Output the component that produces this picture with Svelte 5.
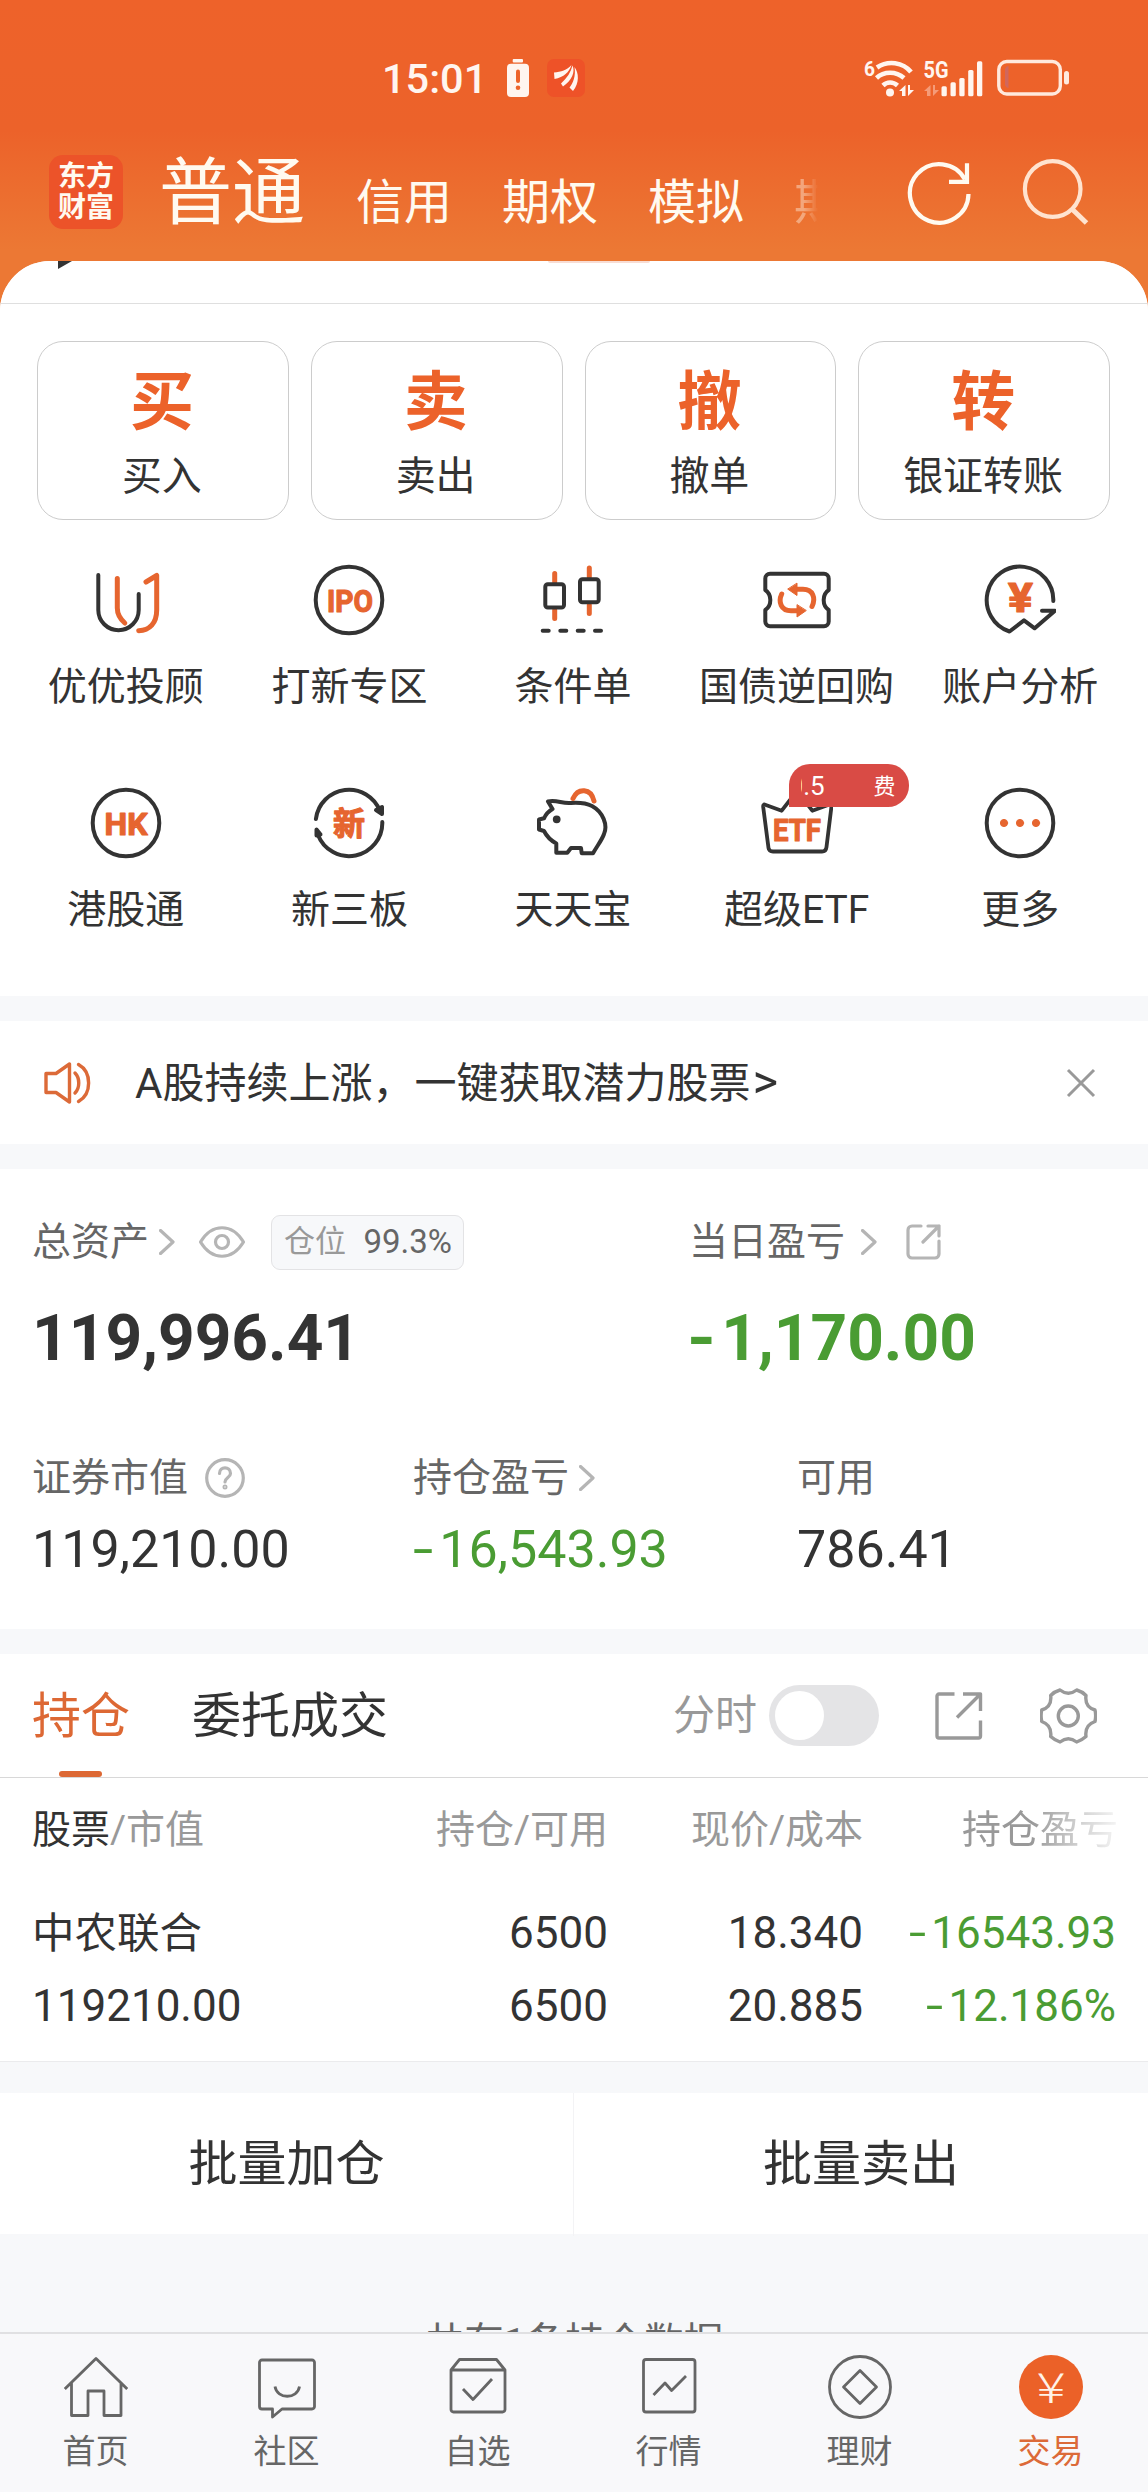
<script>
    const accounts = ['信用', '期权', '模拟']

    const trades = [
        { mark: '买', label: '买入' },
        { mark: '卖', label: '卖出' },
        { mark: '撤', label: '撤单' },
        { mark: '转', label: '银证转账' },
    ]

    const services = [
        { icon: 'uu', label: '优优投顾' },
        { icon: 'ipo', label: '打新专区' },
        { icon: 'candle', label: '条件单' },
        { icon: 'ticket', label: '国债逆回购' },
        { icon: 'account', label: '账户分析' },
        { icon: 'hk', label: '港股通' },
        { icon: 'xin', label: '新三板' },
        { icon: 'pig', label: '天天宝' },
        { icon: 'etf', label: '超级ETF', badge: true },
        { icon: 'more', label: '更多' },
    ]

    const tabs = [
        { icon: 'home', label: '首页' },
        { icon: 'chat', label: '社区' },
        { icon: 'pick', label: '自选' },
        { icon: 'market', label: '行情' },
        { icon: 'money', label: '理财' },
        { icon: 'trade', label: '交易' },
    ]

    let active = 'trade'
    let showTime = false
    let showNotice = true
</script>

<div class="page">
    <header>
        <div class="status">
            <div class="status-left">
                <span class="time">15:01</span>
                <svg class="bat-alert" width="22" height="38" viewBox="0 0 22 38">
                    <rect x="5.700" y="0" width="10.300" height="3.400" rx="1" fill="#fff5ef" />
                    <rect x="0" y="4.700" width="22" height="33.300" rx="4" fill="#fff5ef" />
                    <path d="M11 12.500v9.500" stroke="#ed632a" stroke-width="4" stroke-linecap="round" />
                    <circle cx="11" cy="28.800" r="2.300" fill="#ed632a" />
                </svg>
                <svg width="38" height="38" viewBox="0 0 38 38">
                    <rect width="38" height="38" rx="7" fill="#ee5228" />
                    <path d="M7 13.500C14 13 20 11 24.500 6C22 13.500 17 18 7.500 20Z" fill="#fff5ef" />
                    <path d="M14 24.500C20 19 24 13 25.500 6.500C28.500 13 25 21 16 27.500Z" fill="#fff5ef" />
                    <path d="M27.500 8C32 14 32.500 24 26 32L22.500 28.500C26 24 29 17 27.500 8Z" fill="#fff5ef" />
                </svg>
            </div>
            <div class="status-right">
                <svg class="wifi" width="56" height="42" viewBox="0 0 56 42">
                    <text x="4" y="18.500" font-size="21" font-weight="700" fill="#fff5ef" textLength="11" lengthAdjust="spacingAndGlyphs">6</text>
                    <g fill="none" stroke="#fff5ef" stroke-width="4.600">
                        <path d="M17 10.500C28 3 43 5 51 15" />
                        <path d="M16.500 21C24 14 36 14 44 21" />
                        <path d="M23 28.500C27 24.500 33 24.500 37.500 28.500" />
                    </g>
                    <circle cx="30" cy="35.500" r="4" fill="#fff5ef" />
                    <path d="M45.500 28v11h-3.500v-5h-3zM48 39V28h2v5h4z" fill="#fff5ef" />
                </svg>
                <svg width="64" height="42" viewBox="0 0 64 42">
                    <text x="3.500" y="21" font-size="23" font-weight="700" fill="#fff5ef" textLength="25" lengthAdjust="spacingAndGlyphs">5G</text>
                    <path d="M10.500 28v11h-3.500v-5h-3zM13 39V28h2v5h4z" fill="#f59b78" />
                    <g fill="#fff5ef">
                        <rect x="21.500" y="29.300" width="5.300" height="10" rx="1.500" />
                        <rect x="30.500" y="25.300" width="5.300" height="14" rx="1.500" />
                        <rect x="39.300" y="21" width="5.300" height="18.300" rx="1.500" />
                        <rect x="48.200" y="13" width="5.300" height="26.300" rx="1.500" />
                        <rect x="57" y="4.300" width="5.300" height="35" rx="1.500" />
                    </g>
                </svg>
                <svg class="battery" width="74" height="38" viewBox="0 0 74 38">
                    <rect x="1.800" y="2.500" width="61.500" height="32.500" rx="8" fill="none" stroke="#ffe9dd" stroke-width="3.400" />
                    <path d="M8 10c1-2 2-3 3.500-3v22c-1.500 0-2.500-1-3.500-3z" fill="#d0675d" />
                    <rect x="67" y="12" width="5" height="13.500" rx="2.500" fill="#ffe9dd" />
                </svg>
            </div>
        </div>
        <div class="nav">
            <div class="logo"><span>东方</span><span>财富</span></div>
            <div class="current">普通</div>
            {#each accounts as name}
                <div class="acct">{name}</div>
            {/each}
            <div class="acct faded">期</div>
            <div class="tools">
                <svg width="64" height="64" viewBox="0 0 64 64" fill="none" stroke="#fffaf0" stroke-width="4.200">
                    <path d="M61.500 33A29.300 29.300 0 1 1 58 18.500" />
                    <path d="M60 2.300V20.800H42" />
                </svg>
                <svg width="70" height="70" viewBox="0 0 70 70" fill="none" stroke="#ffe3cf" stroke-width="4.200">
                    <circle cx="32.700" cy="31" r="27.800" />
                    <path d="M52 51L66.500 65" stroke-width="5" />
                </svg>
            </div>
        </div>
    </header>

    <main>
        <div class="peek">
            <span class="corner"></span>
            <span class="blush"></span>
        </div>

        <section class="entry">
            <div class="trades">
                {#each trades as t}
                    <div class="trade">
                        <b>{t.mark}</b>
                        <span>{t.label}</span>
                    </div>
                {/each}
            </div>
            <div class="services">
                {#each services as s}
                    <div class="service">
                        <div class="service-icon">
                            <svg width="72" height="72" viewBox="0 0 72 72" fill="none" stroke="#333" stroke-width="4" stroke-linecap="round" stroke-linejoin="round">
                                {#if s.icon === 'uu'}
                                    <path d="M8.300 11V46a20.200 20.200 0 0 0 40.400 0V30" />
                                    <path class="o" d="M27.300 14.500V44c0 6 3 11 7.500 15M56 18L66.700 11.500V46c0 13-7 20.500-18 20.700" />
                                {:else if s.icon === 'ipo'}
                                    <circle cx="36" cy="36" r="33.300" />
                                    <text x="14" y="47.500" font-size="32" textLength="46" lengthAdjust="spacingAndGlyphs">IPO</text>
                                {:else if s.icon === 'candle'}
                                    <path class="o" d="M17.700 9.500V18M17.700 46v8.500M52.300 4v9M52.300 41v8.500" />
                                    <rect x="8.300" y="20.300" width="18.700" height="23.300" rx="2.500" />
                                    <rect x="43" y="15.300" width="18.700" height="23" rx="2.500" />
                                    <path d="M5.700 66.700h6M23.300 66.700h6M40.700 66.700h6M58 66.700h6" />
                                {:else if s.icon === 'ticket'}
                                    <path d="M9 9.700H63a4.700 4.700 0 0 1 4.700 4.700V26C61 30.500 61 41.500 67.700 46V57.600A4.700 4.700 0 0 1 63 62.300H9A4.700 4.700 0 0 1 4.300 57.600V46C11 41.500 11 30.500 4.300 26V14.400A4.700 4.700 0 0 1 9 9.700Z" />
                                    <path class="o" d="M20.700 30C17 38 20 46.700 30 46.700H37M51 42.500C55 34 52 25.300 42 25.300H35" />
                                    <path class="head" d="M36 41v12l9-6.300zM36 19.500v12l-9-6.200z" />
                                {:else if s.icon === 'account'}
                                    <path d="M69.300 37A33.300 33.300 0 1 0 25.500 67.500L40 56.300L50.700 64.300L71 46.700H58" />
                                    <text x="24" y="48" font-size="41" textLength="25" lengthAdjust="spacingAndGlyphs">¥</text>
                                {:else if s.icon === 'hk'}
                                    <circle cx="36" cy="36" r="33.300" />
                                    <text x="14.500" y="47.500" font-size="32" textLength="43" lengthAdjust="spacingAndGlyphs">HK</text>
                                {:else if s.icon === 'xin'}
                                    <path d="M2.900 32A33.300 33.300 0 0 1 67 24M69.300 35A33.300 33.300 0 0 1 5 48" />
                                    <path d="M69 20v7l-6-4zM3.500 42.500v6l4-1z" />
                                    <text x="20" y="48" font-size="32">新</text>
                                {:else if s.icon === 'pig'}
                                    <path d="M11 14.500C20 12.500 25 17 34 16C42 15.500 48 15.500 55 19C66 25 71 38 67 47C65 53 60 59 56 66.300H44.700L44 61H34L30.300 65.700H19.300V56.500C13 53 9 48 7 44L2 42.500V32.500L7 31.300C8.500 28 12 24 15.500 22Z" />
                                    <circle cx="19.700" cy="32.300" r="2.400" fill="#333" stroke-width="3" />
                                    <path class="o" d="M36 11.500C41 .5 54 1 57 14" />
                                {:else if s.icon === 'etf'}
                                    <path d="M3.500 17.500L20.700 23.700L36 4L51.300 23.700L68.500 17.500Q70.800 17.500 70.400 20L65.500 60Q65 64.500 61 64.500H12Q8 64.500 7.500 61L2.200 20Q2 17.500 3.500 17.500Z" stroke-width="3.800" />
                                    <text x="12" y="54" font-size="32" textLength="48" lengthAdjust="spacingAndGlyphs">ETF</text>
                                {:else}
                                    <circle cx="36" cy="36" r="33.300" />
                                    <g class="dots"><circle cx="20" cy="36" r="3.600" /><circle cx="36" cy="36" r="3.600" /><circle cx="52" cy="36" r="3.600" /></g>
                                {/if}
                            </svg>
                            {#if s.badge}
                                <div class="badge">
                                    <div class="roll"><span class="rate">0.5</span><span>费</span></div>
                                </div>
                            {/if}
                        </div>
                        <span>{s.label}</span>
                    </div>
                {/each}
            </div>
        </section>

        {#if showNotice}
            <section class="notice">
                <svg width="48" height="42" viewBox="0 0 48 42" fill="none" stroke="#dc6a38" stroke-width="3.400" stroke-linejoin="round">
                    <path d="M2 11.500H12L25.500 2V40L12 30.500H2Z" />
                    <path d="M31 11C36 16 36 26 31 31M34.500 2.500C48 10 48 32 34.500 39.500" stroke-linecap="round" />
                </svg>
                <p>A股持续上涨，一键获取潜力股票<span>&gt;</span></p>
                <svg class="close" width="30" height="30" viewBox="0 0 30 30" on:click={() => (showNotice = false)}>
                    <path d="M2 2L28 28M28 2L2 28" stroke="#999" stroke-width="3" />
                </svg>
            </section>
        {/if}

        <section class="assets">
            <div class="row top">
                <div class="cell">
                    <div class="name">
                        总资产
                        <svg class="chev" width="16" height="26" viewBox="0 0 16 26"><path d="M1.500 1.500L14 13L1.500 24.500" /></svg>
                        <svg class="eye" width="46" height="32" viewBox="0 0 46 32">
                            <path d="M1.500 16C13-3 33-3 44.500 16C33 35 13 35 1.500 16Z" />
                            <circle cx="23" cy="16" r="6.500" />
                        </svg>
                        <div class="ratio"><span>仓位</span>99.3%</div>
                    </div>
                    <div class="big">119,996.41</div>
                </div>
                <div class="cell">
                    <div class="name">
                        当日盈亏
                        <svg class="chev day" width="16" height="26" viewBox="0 0 16 26"><path d="M1.500 1.500L14 13L1.500 24.500" /></svg>
                        <svg class="share" width="35" height="36" viewBox="0 0 35 36">
                            <path d="M15 2H6a4 4 0 0 0-4 4V30a4 4 0 0 0 4 4H29a4 4 0 0 0 4-4V17M22 2H33V12M33 2L17 18" />
                        </svg>
                    </div>
                    <div class="big down"><i>-</i>1,170.00</div>
                </div>
            </div>
            <div class="row sub">
                <div class="cell">
                    <div class="name">
                        证券市值
                        <svg class="help" width="40" height="40" viewBox="0 0 40 40">
                            <circle cx="20" cy="20" r="18.300" />
                            <path d="M14.500 15.500C14.500 8 25.500 8 25.500 15.500C25.500 19.500 20 19.500 20 24" />
                            <circle cx="20" cy="29" r=".9" />
                        </svg>
                    </div>
                    <div class="val">119,210.00</div>
                </div>
                <div class="cell">
                    <div class="name">
                        持仓盈亏
                        <svg class="chev" width="16" height="26" viewBox="0 0 16 26"><path d="M1.500 1.500L14 13L1.500 24.500" /></svg>
                    </div>
                    <div class="val down"><i>-</i>16,543.93</div>
                </div>
                <div class="cell">
                    <div class="name">可用</div>
                    <div class="val">786.41</div>
                </div>
            </div>
        </section>

        <section class="holding">
            <div class="bar">
                <div class="tab on">持仓</div>
                <div class="tab">委托成交</div>
                <div class="ops">
                    <span>分时</span>
                    <div class="switch" class:checked={showTime} on:click={() => (showTime = !showTime)}></div>
                    <svg class="out" width="48" height="48" viewBox="0 0 48 48">
                        <path d="M19.500 2H4a2 2 0 0 0-2 2V44a2 2 0 0 0 2 2H43.500a2 2 0 0 0 2-2V28.500M28 2H45.500V19M45 2.500L22 25.500" />
                    </svg>
                    <svg class="gear" width="57" height="56" viewBox="0 0 57 56">
                        <path d="M20 2Q28.300 8.500 36.700 2Q42 3.500 46 7.500Q44.500 19 55 22Q56.300 28 55 33.500Q44.500 37 46 48.500Q42 52 36.700 54Q28.300 47.500 20 54Q14.500 52 10.700 48.500Q12 37 1.700 33.500Q.5 28 1.700 22Q12 19 10.700 7.500Q14.500 3.500 20 2Z" />
                        <circle cx="28.300" cy="28" r="10" />
                    </svg>
                </div>
            </div>
            <div class="table head">
                <div><em>股票</em>/市值</div>
                <div>持仓/可用</div>
                <div>现价/成本</div>
                <div class="cut">持仓盈亏</div>
            </div>
            <div class="table body">
                <div class="stock">中农联合</div>
                <div>6500</div>
                <div>18.340</div>
                <div class="down"><i>-</i>16543.93</div>
                <div>119210.00</div>
                <div>6500</div>
                <div>20.885</div>
                <div class="down"><i>-</i>12.186%</div>
            </div>
        </section>

        <section class="batch">
            <div>批量加仓</div>
            <div>批量卖出</div>
        </section>

        <div class="total">共有1条持仓数据</div>
    </main>

    <footer>
        {#each tabs as tab}
            <div class="foot" class:active={active === tab.icon} on:click={() => (active = tab.icon)}>
                <svg width="64" height="64" viewBox="0 0 64 64" fill="none" stroke="#666" stroke-width="2.800" stroke-linejoin="round">
                    {#if tab.icon === 'home'}
                        <path d="M.8 34L32 3.500L63.200 34M7.500 28V60.500H24V36H40V60.500H57V28" />
                    {:else if tab.icon === 'chat'}
                        <path d="M7 5H57a2.500 2.500 0 0 1 2.500 2.500V51.500A2.500 2.500 0 0 1 57 54H27L17.500 62V54H7A2.500 2.500 0 0 1 4.500 51.500V7.500A2.500 2.500 0 0 1 7 5Z" />
                        <path d="M20 31.500C22 44.500 42.500 44.500 44.500 31.500" />
                    {:else if tab.icon === 'pick'}
                        <path d="M5 15L13.500 4.500H50.500L59 15V54.500a2.500 2.500 0 0 1-2.500 2.500H7.500A2.500 2.500 0 0 1 5 54.500ZM5 15H59M17 34L27 44.500L46 24" />
                    {:else if tab.icon === 'market'}
                        <rect x="6.500" y="4.500" width="51.500" height="52.500" rx="2.500" />
                        <path d="M16.500 40L28 28L34.600 35.500L49 21" />
                    {:else if tab.icon === 'money'}
                        <circle cx="32" cy="32" r="30.500" />
                        <path d="M32 15.500L48.500 32L32 48.500L15.500 32Z" />
                    {:else}
                        <circle cx="32" cy="32" r="32" fill="#eb6128" stroke="none" />
                        <text x="17.500" y="48" font-size="42" textLength="29" lengthAdjust="spacingAndGlyphs">¥</text>
                    {/if}
                </svg>
                <span>{tab.label}</span>
            </div>
        {/each}
    </footer>
</div>

<style>
    :global(body) {
        background: #f7f8fa;
    }
    .page {
        position: relative;
        display: flex;
        flex-direction: column;
        width: 1148px;
        height: 2492px;
        overflow: hidden;
        box-sizing: border-box;
        color: #333;
        font-family: Roboto, "Noto Sans CJK SC", sans-serif;
        background: linear-gradient(#ee622a 0, #ec622a 130px, #ec7834 250px, #ec7834 320px, #f7f8fa 320px);
    }
    svg {
        display: block;
        flex: none;
    }
    header {
        height: 261px;
        flex: none;
    }
    .status {
        display: flex;
        justify-content: space-between;
        align-items: center;
        height: 127px;
        padding: 29px 77px 0 382px;
        box-sizing: border-box;
    }
    .status-left, .status-right {
        display: flex;
        align-items: center;
    }
    .time {
        width: 125px;
        font-size: 41.5px;
        font-weight: 500;
        color: #fff5ef;
        white-space: nowrap;
    }
    .bat-alert {
        margin-right: 18px;
    }
    .status-right svg text {
        stroke: none;
    }
    .wifi {
        margin-right: 4px;
    }
    .battery {
        margin-left: 13px;
    }
    .nav {
        display: flex;
        align-items: flex-end;
        height: 102px;
        padding: 0 58px 0 49px;
        color: #fffaf0;
    }
    .logo {
        display: flex;
        flex-direction: column;
        justify-content: center;
        align-items: center;
        width: 74px;
        height: 74px;
        margin-right: 36px;
        border-radius: 14px;
        background: #ec5329;
        font-size: 28px;
        font-weight: 700;
        line-height: 31px;
    }
    .current {
        width: 197px;
        margin-bottom: -4px;
        font-size: 73px;
        line-height: 80px;
    }
    .acct {
        width: 146px;
        margin-bottom: -4px;
        font-size: 48px;
        line-height: 60px;
    }
    .faded {
        width: 48px;
        opacity: .4;
        -webkit-mask-image: linear-gradient(90deg, #000 20%, transparent 50%);
        mask-image: linear-gradient(90deg, #000 20%, transparent 50%);
    }
    .tools {
        display: flex;
        align-items: flex-start;
        gap: 49px;
        height: 71px;
        margin-left: auto;
    }
    .tools svg:first-child {
        margin-top: 3px;
    }
    main {
        flex: 1;
        min-height: 0;
        overflow: hidden;
        border-radius: 50px 50px 0 0;
        background: #f7f8fa;
    }
    section {
        background: #fff;
        margin-bottom: 25px;
    }
    .peek {
        position: relative;
        height: 43px;
        background: #fff;
        border-bottom: 1px solid #dfdfdf;
        box-sizing: border-box;
    }
    .corner {
        position: absolute;
        left: 58px;
        top: 0;
        border-top: 8px solid #333;
        border-right: 14px solid transparent;
    }
    .blush {
        position: absolute;
        left: 548px;
        top: 0;
        width: 102px;
        height: 2px;
        border-radius: 0 0 50px 50px;
        background: #f8ddd4;
    }
    .entry {
        height: 692px;
        padding-top: 37px;
        box-sizing: border-box;
    }
    .trades {
        display: grid;
        grid-template-columns: repeat(4, 1fr);
        gap: 22px;
        padding: 0 38px 0 37px;
    }
    .trade {
        display: flex;
        flex-direction: column;
        align-items: center;
        height: 179px;
        padding: 19px 2px 0 0;
        border: 1px solid #ccc;
        border-radius: 26px;
        box-sizing: border-box;
    }
    .trade b {
        font-size: 64px;
        line-height: 84px;
        color: #ec622a;
    }
    .trade span {
        font-size: 40px;
        line-height: 64px;
    }
    .services {
        display: grid;
        grid-template-columns: repeat(5, 1fr);
        padding: 44px 16px 0 14px;
    }
    .service {
        display: flex;
        flex-direction: column;
        align-items: center;
        height: 223px;
        font-size: 39px;
        white-space: nowrap;
    }
    .service > span {
        margin-top: 23px;
        line-height: 56px;
    }
    .service-icon {
        position: relative;
    }
    .service .o {
        stroke: #e6652f;
        stroke-width: 5;
    }
    .service text {
        fill: #e6652f;
        stroke: #e6652f;
        stroke-width: 1.2;
        font-weight: 700;
    }
    .service .head, .dots {
        fill: #e6652f;
        stroke: #e6652f;
        stroke-width: 1;
    }
    .badge {
        position: absolute;
        left: 28px;
        top: -23px;
        width: 120px;
        height: 43px;
        padding: 0 13px 0 12px;
        border-radius: 21px 21px 21px 0;
        box-sizing: border-box;
        background: #d94b45;
        color: #fff;
    }
    .roll {
        display: flex;
        justify-content: space-between;
        overflow: hidden;
        font-size: 22px;
        line-height: 45px;
    }
    .rate {
        margin-left: -12px;
        font-size: 26px;
    }
    .notice {
        display: flex;
        align-items: center;
        height: 123px;
        padding: 0 52px 0 44px;
    }
    .notice p {
        flex: 1;
        margin: 2px 0 0 43px;
        font-size: 42px;
        line-height: 60px;
    }
    .notice p span {
        margin-left: 2px;
        font-size: 49px;
        line-height: 1;
    }
    .assets {
        height: 460px;
        padding: 42px 32px 0;
        box-sizing: border-box;
    }
    .row {
        display: grid;
    }
    .top {
        grid-template-columns: 657px 1fr;
    }
    .sub {
        grid-template-columns: 381px 384px 1fr;
        margin-top: 68px;
    }
    .name {
        display: flex;
        align-items: center;
        height: 62px;
        font-size: 39px;
        line-height: 62px;
        color: #666;
    }
    .name svg {
        fill: none;
        stroke: #b5b5b5;
        stroke-width: 3.2;
        stroke-linecap: round;
        stroke-linejoin: round;
    }
    .chev {
        margin-left: 10px;
    }
    .day {
        margin-left: 16px;
    }
    .eye {
        margin-left: 24px;
    }
    .share {
        margin-left: 29px;
    }
    .help {
        margin-left: 17px;
    }
    .ratio {
        display: flex;
        align-items: center;
        justify-content: space-between;
        width: 193px;
        height: 55px;
        margin-left: 26px;
        padding: 0 11px 0 12px;
        border: 1px solid #e3e3e5;
        border-radius: 9px;
        box-sizing: border-box;
        background: #f7f8fa;
        font-size: 33px;
        line-height: 52px;
    }
    .ratio span {
        font-size: 31px;
        color: #999;
    }
    .big {
        margin-top: 26px;
        font-size: 64px;
        font-weight: 700;
        line-height: 80px;
    }
    .val {
        margin-top: 10px;
        font-size: 52px;
        line-height: 62px;
    }
    .down {
        color: #4a9c33;
    }
    .down i {
        display: inline-block;
        font-style: normal;
        transform: scaleX(1.4);
        transform-origin: 0 50%;
        margin-right: .23em;
    }
    .big i {
        margin-left: -2px;
        margin-right: 9px;
        transform: scaleX(1.15);
    }
    .bar {
        display: flex;
        align-items: center;
        height: 124px;
        padding: 0 51px 0 32px;
        border-bottom: 1px solid #d8d8d8;
        box-sizing: border-box;
    }
    .tab {
        position: relative;
        margin-right: 62px;
        padding-top: 2px;
        font-size: 49px;
        line-height: 121px;
    }
    .on {
        color: #dd6834;
    }
    .on::after {
        content: '';
        position: absolute;
        left: 27px;
        bottom: 0;
        width: 43px;
        height: 6px;
        border-radius: 3px;
        background: #dd6834;
    }
    .ops {
        display: flex;
        align-items: center;
        margin-left: auto;
        font-size: 42px;
        line-height: 60px;
        color: #999;
    }
    .ops svg {
        fill: none;
        stroke: #999;
        stroke-width: 3.4;
        stroke-linejoin: round;
    }
    .switch {
        width: 110px;
        height: 61px;
        margin-left: 12px;
        padding: 6px;
        border-radius: 31px;
        box-sizing: border-box;
        background: #e4e4e6;
    }
    .switch::after {
        content: '';
        display: block;
        width: 49px;
        height: 49px;
        border-radius: 50%;
        background: #fff;
    }
    .switch.checked {
        background: #eb6128;
    }
    .switch.checked::after {
        margin-left: auto;
    }
    .out {
        margin-left: 56px;
    }
    .gear {
        margin-left: 57px;
    }
    .holding {
        height: 407px;
        margin-bottom: 31px;
        border-bottom: 1px solid #ebebed;
    }
    .table {
        display: grid;
        grid-template-columns: 301px 275px 255px 1fr;
        padding: 0 32px;
        text-align: right;
        white-space: nowrap;
    }
    .table > div:nth-child(4n + 1) {
        text-align: left;
    }
    .head {
        font-size: 39px;
        line-height: 104px;
        color: #999;
    }
    .head em {
        font-style: normal;
        color: #333;
    }
    .head .cut {
        margin-right: -2px;
        -webkit-mask-image: linear-gradient(90deg, #000 66%, rgba(0, 0, 0, .5) 83%, rgba(0, 0, 0, .1) 100%);
        mask-image: linear-gradient(90deg, #000 66%, rgba(0, 0, 0, .5) 83%, rgba(0, 0, 0, .1) 100%);
    }
    .body {
        padding-top: 15px;
        font-size: 44px;
        line-height: 73px;
    }
    .body .stock {
        font-size: 42.5px;
    }
    .batch {
        display: grid;
        grid-template-columns: 573px 1fr;
        height: 141px;
        margin-bottom: 79px;
        font-size: 49px;
        line-height: 143px;
        text-align: center;
    }
    .batch div + div {
        border-left: 1px solid #f3f3f5;
    }
    .total {
        font-size: 39.5px;
        line-height: 60px;
        text-align: center;
        color: #666;
    }
    footer {
        display: grid;
        grid-template-columns: repeat(6, 1fr);
        height: 160px;
        flex: none;
        padding-right: 2px;
        border-top: 2px solid #e0e0e2;
        box-sizing: border-box;
        background: #f8f8fa;
    }
    .foot {
        display: flex;
        flex-direction: column;
        align-items: center;
        padding-top: 21px;
        font-size: 33px;
        line-height: 48px;
        color: #666;
    }
    .foot span {
        margin-top: 9px;
    }
    .foot text {
        fill: #fff3e8;
        stroke: none;
        font-family: "Noto Sans CJK SC", sans-serif;
        font-weight: 300;
    }
    .foot.active {
        color: #dc6a38;
    }
</style>
